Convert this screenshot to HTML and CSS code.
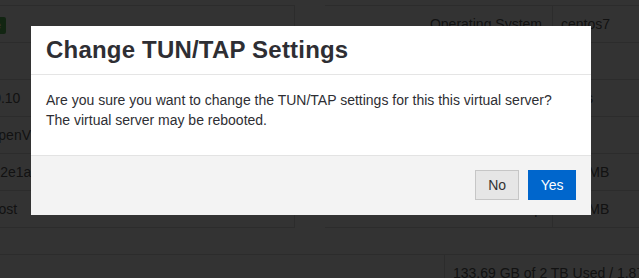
FILE: index.html
```html
<!DOCTYPE html>
<html lang="en">
<head>
  <meta charset="UTF-8">
  <title>Virtual Server</title>
  <meta name="viewport" content="width=device-width, initial-scale=1.0">
  <link rel="stylesheet" href="styles.css">
</head>
<body>

<div class="panels">
  <div class="panel">
    <table class="info info-left">
      <tr><td class="k">Status</td><td class="v"><span class="label-ok">Online</span></td></tr>
      <tr><td class="k">Node</td><td class="v">vps1</td></tr>
      <tr><td class="k">Main IP</td><td class="v">10.0.0.10</td></tr>
      <tr><td class="k">Type</td><td class="v">Virt: openVZ</td></tr>
      <tr><td class="k">UUID</td><td class="v">8a4c52e1a7b3f09d</td></tr>
      <tr><td class="k">Hostname</td><td class="v">localhost</td></tr>
    </table>
  </div>
  <div class="panel">
    <table class="info info-right">
      <tr><td class="k">Operating System</td><td class="v">centos7</td></tr>
      <tr><td class="k">Architecture</td><td class="v">x64</td></tr>
      <tr><td class="k">IP Addresses</td><td class="v">2 IPs</td></tr>
      <tr><td class="k">CPU Cores</td><td class="v">2</td></tr>
      <tr><td class="k">Memory</td><td class="v">512 MB</td></tr>
      <tr><td class="k">Swap</td><td class="v">512 MB</td></tr>
    </table>
  </div>
</div>

<div class="usage">
  <div class="usage-label">Disk Space</div>
  <div class="usage-value">133.69 GB of 2 TB Used / 1.87 TB Free</div>
</div>

<div class="backdrop">
  <div class="modal">
    <div class="modal-header">
      <h4 class="modal-title">Change TUN/TAP Settings</h4>
    </div>
    <div class="modal-body">
      <p>Are you sure you want to change the TUN/TAP settings for this this virtual server?<br>
      The virtual server may be rebooted.</p>
    </div>
    <div class="modal-footer">
      <button class="btn btn-default">No</button>
      <button class="btn btn-primary">Yes</button>
    </div>
  </div>
</div>

</body>
</html>
```

FILE: styles.css
```css
html, body { overflow: hidden; }
body { margin: 0; background: #fff; color: #5a5a5a; font-family: "Liberation Sans", Arial, sans-serif; font-size: 14px; line-height: 20px; }

/* page behind the dialog */
.panels { display: grid; grid-template-columns: 420px 1fr; column-gap: 30px; margin: 5px -120px 0 -125px; }
.panel { border: 1px solid #ddd; border-left: none; }
.info { width: 100%; border-collapse: collapse; table-layout: fixed; }
.info td { padding: 8px; border-top: 1px solid #ddd; white-space: nowrap; overflow: hidden; }
.info tr:first-child td { border-top: none; height: 20px; }
.info td.k { text-align: right; padding-right: 10px; border-right: 1px solid #ddd; }
.info-left td.k { width: 60px; }
.info-right td.k { width: 209px; }
.label-ok { display: inline-block; vertical-align: middle; background: #5cb85c; color: #fff; font-size: 11px; font-weight: bold; line-height: 11px; padding: 3px 5px; border-radius: 2px; }

.usage { display: grid; grid-template-columns: 445px 1fr; margin-top: 26px; border-top: 1px solid #ddd; }
.usage-label { border-right: 1px solid #ddd; padding: 8px; text-align: right; color: #fff; }
.usage-value { padding: 8px; white-space: nowrap; }

/* dialog */
.backdrop { position: fixed; top: 0; left: 0; right: 0; bottom: 0; background: rgba(0, 0, 0, 0.8); display: flex; align-items: flex-start; }
.modal { width: 560px; margin: 26px 0 0 31px; background: #fff; color: #2e2e33; }
.modal-header { padding: 10px 15px; border-bottom: 1px solid #e5e5e5; }
.modal-title { margin: 0; font-size: 24px; line-height: 28px; font-weight: bold; letter-spacing: 0.2px; }
.modal-body { padding: 15px 15px 25px; }
.modal-body p { margin: 0; }
.modal-footer { display: flex; justify-content: flex-end; gap: 9px; padding: 14px 15px 15px; background: #f3f3f3; border-top: 1px solid #e3e3e3; }
.btn { height: 30px; padding: 0 12px; font-family: inherit; font-size: 14px; line-height: 28px; border: 1px solid transparent; cursor: pointer; }
.btn-default { background: #e6e6e6; border-color: #c6c6c6; color: #333; }
.btn-primary { background: #0066cc; border-color: #0066cc; color: #fff; padding: 0 11.5px; }
```
